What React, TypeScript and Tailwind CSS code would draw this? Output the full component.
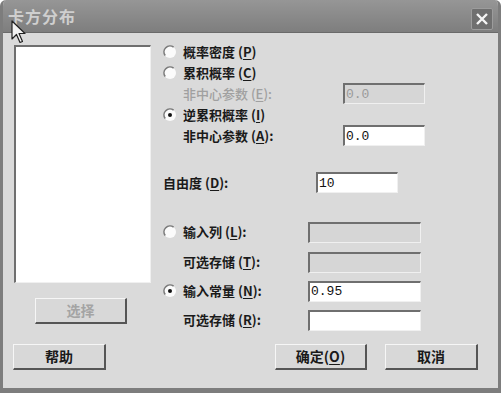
import React from 'react';

const cjk = { fontFamily: '"Noto Sans CJK SC", "Noto Sans", sans-serif' };

const Radio: React.FC<{ checked?: boolean }> = ({ checked }) => (
  <svg width="14" height="14" viewBox="0 0 14 14" className="shrink-0">
    <circle cx="7" cy="7" r="6" fill="#fbfbfb" />
    <path d="M2.2 10.6 A6 6 0 0 1 10.6 2.2" fill="none" stroke="#7a7a7a" strokeWidth="1.6" />
    {checked && <circle cx="7" cy="7" r="2" fill="#111" />}
  </svg>
);

const Mn: React.FC<{ k: string }> = ({ k }) => (
  <span>
    {' '}(<span className="underline underline-offset-2">{k}</span>)
  </span>
);

const Field: React.FC<{ w: string; value?: string; disabled?: boolean }> = ({ w, value, disabled }) => (
  <div
    className={`${w} h-[21px] border-t-2 border-l-2 border-t-[#6f6f6f] border-l-[#6f6f6f] border-b border-r border-b-[#f0f0f0] border-r-[#f0f0f0] flex items-center pl-[1px] text-[13px] leading-none font-normal ${
      disabled ? 'bg-[#d6d6d6] text-[#9a9a9a]' : 'bg-white text-[#111]'
    }`}
    style={{ fontFamily: '"Liberation Mono", monospace' }}
  >
    {value}
  </div>
);

const Btn: React.FC<{ w: string; disabled?: boolean; children: React.ReactNode }> = ({ w, disabled, children }) => (
  <div
    className={`${w} h-[26px] bg-[#d8d8d8] border-t border-l border-t-[#f6f6f6] border-l-[#f6f6f6] border-b-2 border-r-2 border-b-[#555] border-r-[#555] flex items-center justify-center text-[14px] font-semibold ${
      disabled ? 'text-[#a4a4a4]' : 'text-[#1a1a1a]'
    }`}
    style={cjk}
  >
    {children}
  </div>
);

export default function App() {
  return (
    <div className="w-[501px] h-[393px] bg-[#dadada] border-x-[3px] border-b-[5px] border-[#7d7d7d] rounded-t-[6px] relative overflow-hidden" style={cjk}>
      {/* title bar */}
      <div className="h-[33px] bg-gradient-to-b from-[#969696] to-[#7e7e7e] border-b border-[#6a6a6a] flex items-center justify-between pl-[5px] pr-[5px]">
        <span className="text-[16px] font-bold text-[#cfcfcf] tracking-[1px]">卡方分布</span>
        <div className="w-[22px] h-[22px] mt-[5px] rounded-[2px] bg-[#6f6f6f] border border-[#9c9c9c] flex items-center justify-center">
          <svg width="14" height="14" viewBox="0 0 14 14">
            <path d="M2 2 L12 12 M12 2 L2 12" stroke="#f5f5f5" strokeWidth="2.4" />
          </svg>
        </div>
      </div>

      {/* body */}
      <div className="flex h-[297px] text-[13px] text-[#1a1a1a] font-semibold">
        <div className="pl-[11px] pt-[12px] flex flex-col">
          <div className="w-[137px] h-[238px] bg-white border-t-2 border-l-2 border-t-[#6f6f6f] border-l-[#6f6f6f] border-b border-r border-b-[#f0f0f0] border-r-[#f0f0f0]" />
          <div className="mt-[15px] ml-[21px]">
            <Btn w="w-[92px]" disabled>选择</Btn>
          </div>
        </div>

        <div className="ml-[12px] flex flex-col">
          <div className="mt-[9px] h-[20px] flex items-center gap-[6px]">
            <Radio />
            <span>概率密度<Mn k="P" /></span>
          </div>
          <div className="mt-[1px] h-[20px] flex items-center gap-[6px]">
            <Radio />
            <span>累积概率<Mn k="C" /></span>
          </div>
          <div className="h-[21px] flex items-center">
            <span className="w-[180px] pl-[20px] text-[#a0a0a0] font-medium">非中心参数<Mn k="E" />:</span>
            <Field w="w-[82px]" value="0.0" disabled />
          </div>
          <div className="mt-[1px] h-[20px] flex items-center gap-[6px]">
            <Radio checked />
            <span>逆累积概率<Mn k="I" /></span>
          </div>
          <div className="h-[21px] flex items-center">
            <span className="w-[180px] pl-[20px]">非中心参数<Mn k="A" />:</span>
            <Field w="w-[82px]" value="0.0" />
          </div>
          <div className="mt-[26px] h-[21px] flex items-center">
            <span className="w-[153px]">自由度<Mn k="D" />:</span>
            <Field w="w-[82px]" value="10" />
          </div>
          <div className="mt-[29px] h-[20px] flex items-center">
            <span className="w-[145px] flex items-center gap-[6px]">
              <Radio />
              <span>输入列<Mn k="L" />:</span>
            </span>
            <Field w="w-[113px]" disabled />
          </div>
          <div className="mt-[10px] h-[20px] flex items-center">
            <span className="w-[145px] pl-[20px]">可选存储<Mn k="T" />:</span>
            <Field w="w-[113px]" disabled />
          </div>
          <div className="mt-[9px] h-[20px] flex items-center">
            <span className="w-[145px] flex items-center gap-[6px]">
              <Radio checked />
              <span>输入常量<Mn k="N" />:</span>
            </span>
            <Field w="w-[113px]" value="0.95" />
          </div>
          <div className="mt-[9px] h-[20px] flex items-center">
            <span className="w-[145px] pl-[20px]">可选存储<Mn k="R" />:</span>
            <Field w="w-[113px]" />
          </div>
        </div>
      </div>

      {/* bottom buttons */}
      <div className="mt-[14px] flex pl-[10px]">
        <Btn w="w-[93px]">帮助</Btn>
        <div className="ml-[169px]">
          <Btn w="w-[92px]">确定<Mn k="O" /></Btn>
        </div>
        <div className="ml-[18px]">
          <Btn w="w-[93px]">取消</Btn>
        </div>
      </div>

      {/* mouse pointer */}
      <svg className="absolute left-[8px] top-[20px]" width="16" height="26" viewBox="0 0 16 26">
        <path d="M1 1 L1 19 L5.5 14.5 L9 22.5 L11.5 21.5 L8 13.5 L14 13.5 Z" fill="#f2f2f2" stroke="#222" strokeWidth="1.2" strokeLinejoin="round" />
      </svg>
    </div>
  );
}
